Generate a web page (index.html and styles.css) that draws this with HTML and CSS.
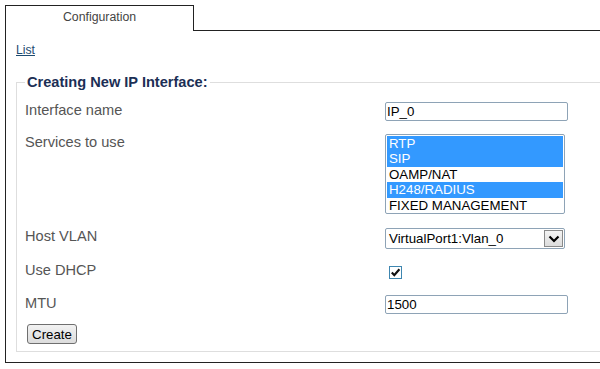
FILE: index.html
```html
<!DOCTYPE html>
<html lang="en">
<head>
  <meta charset="UTF-8" />
  <title>Configuration</title>
  <link rel="stylesheet" href="styles.css">
</head>
<body>
  <div class="tab-bar">
    <div class="tab">Configuration</div>
    <div class="tab-filler"></div>
  </div>

  <div class="panel">
    <a href="#" class="list-link">List</a>

    <fieldset class="box">
      <legend>Creating New IP Interface:</legend>
      <div class="form-grid">
        <label for="ifname">Interface name</label>
        <input type="text" id="ifname" class="text-input" value="IP_0" />

        <label>Services to use</label>
        <div class="listbox">
          <div class="opt selected">RTP</div>
          <div class="opt selected">SIP</div>
          <div class="opt">OAMP/NAT</div>
          <div class="opt selected">H248/RADIUS</div>
          <div class="opt">FIXED MANAGEMENT</div>
        </div>

        <label>Host VLAN</label>
        <div class="dropdown">
          <span class="dropdown-value">VirtualPort1:Vlan_0</span>
          <span class="dropdown-btn">
            <svg width="12" height="8" viewBox="0 0 12 8"><path d="M1.5 1.5 L6 6 L10.5 1.5" fill="none" stroke="#000" stroke-width="2.2"/></svg>
          </span>
        </div>

        <label>Use DHCP</label>
        <span class="check">
          <svg width="11" height="11" viewBox="0 0 11 11"><path d="M1.8 5.6 L4.3 8.2 L9.4 2.2" fill="none" stroke="#111" stroke-width="2.2"/></svg>
        </span>

        <label for="mtu">MTU</label>
        <input type="text" id="mtu" class="text-input" value="1500" />

        <button type="button" class="create-btn">Create</button>
      </div>
    </fieldset>
  </div>
</body>
</html>
```

FILE: styles.css
```css
html, body {
  margin: 0;
  overflow: hidden;
}
body {
  font-family: "Liberation Sans", Arial, sans-serif;
  padding: 5px 0 0 5px;
  background: #fff;
}
.tab-bar {
  display: flex;
}
.tab {
  width: 187px;
  height: 21px;
  padding-top: 4px;
  border: 1px solid #222;
  border-bottom: none;
  text-align: center;
  font-size: 12.3px;
  line-height: 14px;
  color: #444;
}
.tab-filler {
  flex: 1;
  border-bottom: 1px solid #222;
}
.panel {
  border-left: 1px solid #222;
  border-bottom: 1px solid #222;
  padding: 12px 0 10px 10px;
}
.list-link {
  display: block;
  width: max-content;
  font-size: 12.2px;
  line-height: 14px;
  color: #1d4b70;
}
.box {
  margin: 16px 0 0 0;
  padding: 9px 0 7px 8px;
  border: 1px solid #dedede;
  border-right: none;
  min-width: 0;
}
.box legend {
  padding: 0 2px;
  font-size: 14.6px;
  line-height: 18px;
  font-weight: bold;
  color: #1c2f55;
}
.form-grid {
  display: grid;
  grid-template-columns: 360px auto;
  grid-template-rows: 22px 84px 24px 23px 21px auto;
  row-gap: 10px;
  justify-items: start;
  align-items: start;
}
.form-grid label {
  font-size: 14.6px;
  line-height: 20px;
  color: #555;
}
.text-input {
  box-sizing: border-box;
  width: 183px;
  height: 19px;
  margin: 2px 0 0 0;
  padding: 0 1px;
  border: 1px solid #8ea3b6;
  border-radius: 2px;
  font-family: "Liberation Sans", Arial, sans-serif;
  font-size: 13.3px;
  color: #000;
  outline: none;
}
.listbox {
  box-sizing: border-box;
  width: 180px;
  height: 80px;
  margin-top: 2px;
  padding: 1px;
  border: 1px solid #8ea3b6;
  border-radius: 2px;
  font-size: 13.3px;
}
.opt {
  height: 15.4px;
  line-height: 15.4px;
  padding: 0 2px;
  color: #000;
}
.opt.selected {
  background: #3399ff;
  color: #fff;
}
.dropdown {
  box-sizing: border-box;
  display: flex;
  align-items: center;
  width: 180px;
  height: 21px;
  margin-top: 2px;
  padding: 1px 1px 1px 3px;
  border: 1px solid #8ea3b6;
  border-radius: 2px;
  font-size: 13.3px;
}
.dropdown-value {
  flex: 1;
}
.dropdown-btn {
  box-sizing: border-box;
  display: flex;
  align-items: center;
  justify-content: center;
  width: 19px;
  height: 17px;
  border: 1px solid #8a8a8a;
  background: linear-gradient(#f4f4f4, #dcdcdc);
}
.check {
  box-sizing: border-box;
  display: flex;
  align-items: center;
  justify-content: center;
  width: 13px;
  height: 13px;
  margin: 6px 0 0 4px;
  border: 1px solid #3e86b0;
  background: #fff;
}
.create-btn {
  box-sizing: border-box;
  width: 50px;
  height: 20px;
  margin-left: 2px;
  padding: 0;
  border: 1px solid #6f6f6f;
  border-radius: 3px;
  background: linear-gradient(#f2f2f2, #dcdcdc);
  font-family: "Liberation Sans", Arial, sans-serif;
  font-size: 13.3px;
  color: #000;
}
```
